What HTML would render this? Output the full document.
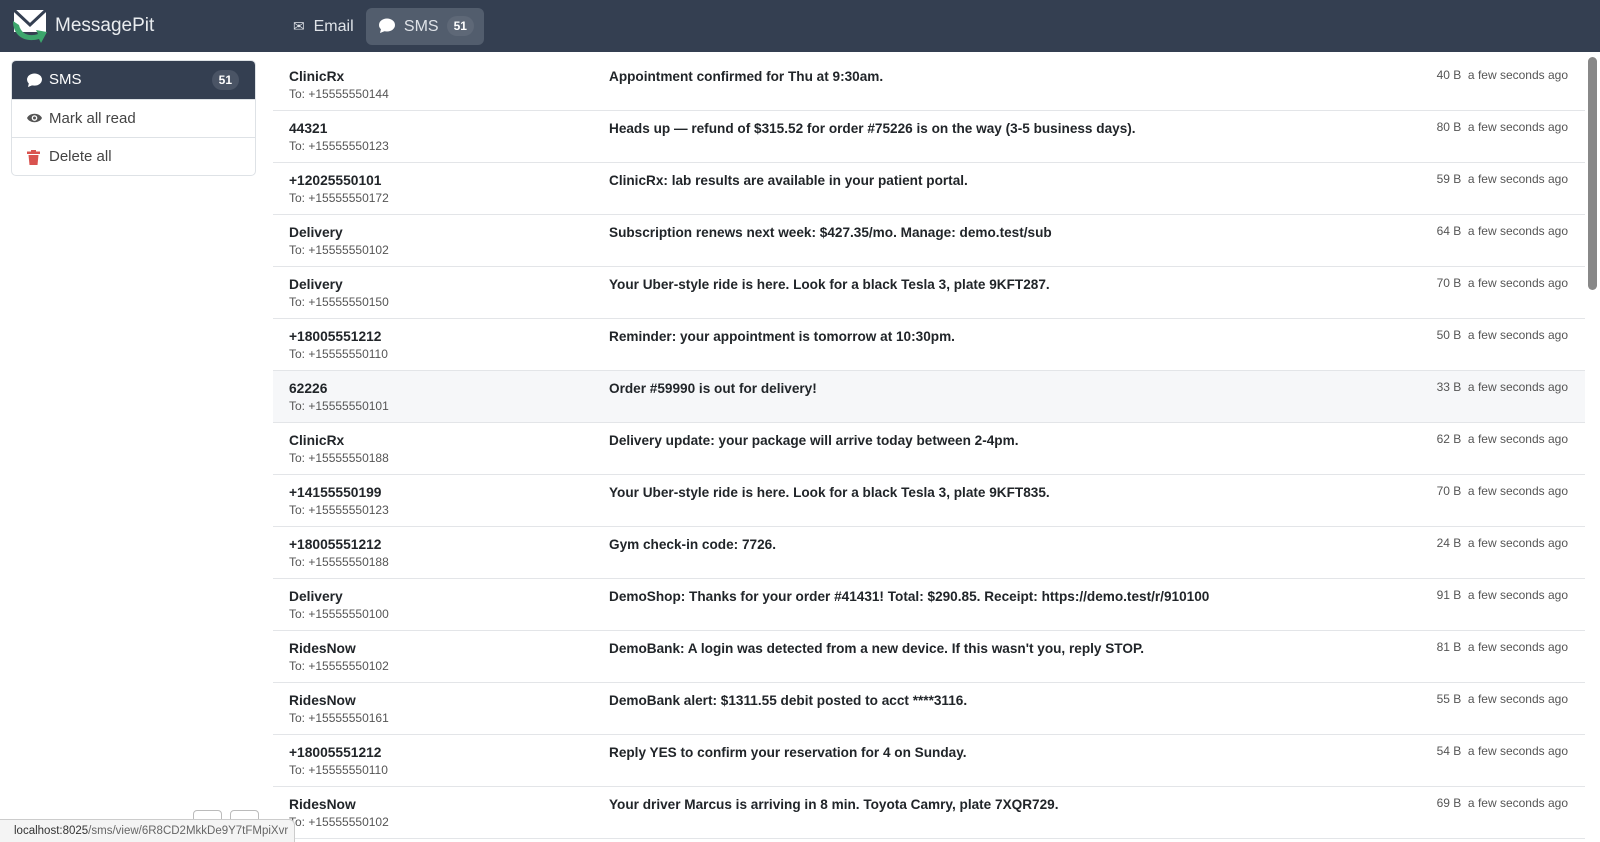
<!DOCTYPE html>
<html><head><style>
*{box-sizing:border-box;margin:0;padding:0}
body{width:1600px;height:842px;overflow:hidden;background:#fff;font-family:"Liberation Sans",sans-serif;color:#212529;position:relative}
.hdr{position:absolute;left:0;top:0;width:1600px;height:52px;background:#343f51}
.brand{position:absolute;left:55px;top:15px;color:#e9ecef;font-size:19px}
.nav{position:absolute;top:8px;height:37px;color:#dfe3e8;font-size:16px;line-height:37px;border-radius:6px}
.badge{display:inline-block;background:#4f5968;color:#fff;font-weight:bold;font-size:12px;border-radius:10px;padding:0 7px;line-height:20px;margin-left:8px;vertical-align:1px}
.side{position:absolute;left:11px;top:60px;width:245px;border:1px solid #dee2e6;border-radius:5px;overflow:hidden}
.side div{height:38px;line-height:38px;padding-left:37px;font-size:15px;color:#444;border-top:1px solid #dee2e6;position:relative}
.side div.act{background:#343f51;color:#fff;border-top:none}
.side svg{position:absolute;left:15px;top:12px}
.row{position:absolute;left:273px;width:1312px;height:52px;border-bottom:1px solid #e3e5e8}
.row .f{position:absolute;left:16px;top:10px;font-weight:bold;font-size:13.8px}
.row .t{position:absolute;left:16px;top:28px;font-size:12px;color:#555}
.row .m{position:absolute;left:336px;top:10px;font-weight:bold;font-size:13.6px}
.row .s{position:absolute;right:17px;top:9px;font-size:12px;color:#555}
.sb{position:absolute;left:1588px;top:57px;width:9px;height:233px;background:#888;border-radius:5px}
.url{position:absolute;left:0;top:819px;height:23px;padding:5px 6px 0 14px;background:#f4f4f4;border:1px solid #ccc;border-left:none;border-bottom:none;border-radius:0 6px 0 0;font-size:11.5px;color:#666}
.url b{color:#333;font-weight:normal}
</style></head><body>
<div class="hdr">
<svg style="position:absolute;left:11px;top:7px" width="38" height="38" viewBox="0 0 38 38"><path d="M3 3h32v22H3z" fill="#fff"/><path d="M3 3l16 15 16-15" fill="none" stroke="#343f51" stroke-width="3"/><path d="M2 14c0 15 12 22 26 18l2 4 6-11-11-2 2 4c-9 3-17 0-19-9z" fill="#3ca66c"/></svg>
<div class="brand">MessagePit</div>
<div class="nav" style="left:285px;padding:0 8px"><span style="font-size:14px">✉</span>&nbsp; Email</div>
<div class="nav" style="left:366px;width:118px;background:#525d6d;padding-left:13px"><svg width="16" height="15" viewBox="0 0 16 15" style="vertical-align:-2px"><ellipse cx="8" cy="7" rx="8" ry="6.5" fill="#fff"/><path d="M2 11l-1 4 5-2z" fill="#fff"/></svg>&nbsp; SMS<span class="badge" style="background:#5e6877">51</span></div>
</div>
<div class="side">
<div class="act"><svg width="15" height="14" viewBox="0 0 16 15"><ellipse cx="8" cy="7" rx="8" ry="6.5" fill="#fff"/><path d="M2 11l-1 4 5-2z" fill="#fff"/></svg>SMS<span class="badge" style="position:absolute;right:16px;top:9px;background:#4a5465">51</span></div>
<div><svg width="15" height="12" viewBox="0 0 16 12"><path d="M0 6c3-6 13-6 16 0-3 6-13 6-16 0z" fill="#555"/><circle cx="8" cy="6" r="3" fill="#fff"/><circle cx="8" cy="6" r="1.6" fill="#555"/></svg>Mark all read</div>
<div><svg width="13" height="15" viewBox="0 0 13 15"><rect x="0" y="1.5" width="13" height="2.5" fill="#d9534f"/><rect x="4" y="0" width="5" height="2" fill="#d9534f"/><path d="M1.5 5h10l-1 10h-8z" fill="#d9534f"/></svg>Delete all</div>
</div>
<div class="row" style="top:59px"><div class="f">ClinicRx</div><div class="t">To: +15555550144</div><div class="m">Appointment confirmed for Thu at 9:30am.</div><div class="s">40 B &nbsp;a few seconds ago</div></div>
<div class="row" style="top:111px"><div class="f">44321</div><div class="t">To: +15555550123</div><div class="m">Heads up — refund of $315.52 for order #75226 is on the way (3-5 business days).</div><div class="s">80 B &nbsp;a few seconds ago</div></div>
<div class="row" style="top:163px"><div class="f">+12025550101</div><div class="t">To: +15555550172</div><div class="m">ClinicRx: lab results are available in your patient portal.</div><div class="s">59 B &nbsp;a few seconds ago</div></div>
<div class="row" style="top:215px"><div class="f">Delivery</div><div class="t">To: +15555550102</div><div class="m">Subscription renews next week: $427.35/mo. Manage: demo.test/sub</div><div class="s">64 B &nbsp;a few seconds ago</div></div>
<div class="row" style="top:267px"><div class="f">Delivery</div><div class="t">To: +15555550150</div><div class="m">Your Uber-style ride is here. Look for a black Tesla 3, plate 9KFT287.</div><div class="s">70 B &nbsp;a few seconds ago</div></div>
<div class="row" style="top:319px"><div class="f">+18005551212</div><div class="t">To: +15555550110</div><div class="m">Reminder: your appointment is tomorrow at 10:30pm.</div><div class="s">50 B &nbsp;a few seconds ago</div></div>
<div class="row" style="top:371px;background:#f6f7f9"><div class="f">62226</div><div class="t">To: +15555550101</div><div class="m">Order #59990 is out for delivery!</div><div class="s">33 B &nbsp;a few seconds ago</div></div>
<div class="row" style="top:423px"><div class="f">ClinicRx</div><div class="t">To: +15555550188</div><div class="m">Delivery update: your package will arrive today between 2-4pm.</div><div class="s">62 B &nbsp;a few seconds ago</div></div>
<div class="row" style="top:475px"><div class="f">+14155550199</div><div class="t">To: +15555550123</div><div class="m">Your Uber-style ride is here. Look for a black Tesla 3, plate 9KFT835.</div><div class="s">70 B &nbsp;a few seconds ago</div></div>
<div class="row" style="top:527px"><div class="f">+18005551212</div><div class="t">To: +15555550188</div><div class="m">Gym check-in code: 7726.</div><div class="s">24 B &nbsp;a few seconds ago</div></div>
<div class="row" style="top:579px"><div class="f">Delivery</div><div class="t">To: +15555550100</div><div class="m">DemoShop: Thanks for your order #41431! Total: $290.85. Receipt: https://demo.test/r/910100</div><div class="s">91 B &nbsp;a few seconds ago</div></div>
<div class="row" style="top:631px"><div class="f">RidesNow</div><div class="t">To: +15555550102</div><div class="m">DemoBank: A login was detected from a new device. If this wasn't you, reply STOP.</div><div class="s">81 B &nbsp;a few seconds ago</div></div>
<div class="row" style="top:683px"><div class="f">RidesNow</div><div class="t">To: +15555550161</div><div class="m">DemoBank alert: $1311.55 debit posted to acct ****3116.</div><div class="s">55 B &nbsp;a few seconds ago</div></div>
<div class="row" style="top:735px"><div class="f">+18005551212</div><div class="t">To: +15555550110</div><div class="m">Reply YES to confirm your reservation for 4 on Sunday.</div><div class="s">54 B &nbsp;a few seconds ago</div></div>
<div class="row" style="top:787px"><div class="f">RidesNow</div><div class="t">To: +15555550102</div><div class="m">Your driver Marcus is arriving in 8 min. Toyota Camry, plate 7XQR729.</div><div class="s">69 B &nbsp;a few seconds ago</div></div>
<div class="sb"></div>
<div style="position:absolute;left:193px;top:810px;width:29px;height:30px;border:1px solid #bbb;border-radius:4px"></div>
<div style="position:absolute;left:230px;top:810px;width:29px;height:30px;border:1px solid #bbb;border-radius:4px"></div>
<div class="url"><b>localhost:8025</b>/sms/view/6R8CD2MkkDe9Y7tFMpiXvr</div>
</body></html>
